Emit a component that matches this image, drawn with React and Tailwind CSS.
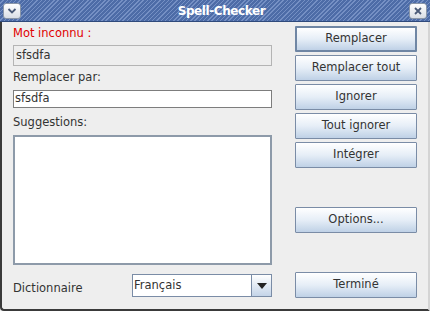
import React from 'react';

const font = { fontFamily: '"DejaVu Sans", "Liberation Sans", sans-serif' };

function Btn({ children, primary }) {
  return (
    <button
      className={
        'w-[122px] h-[26px] flex items-center justify-center text-[11.5px] text-[#333333] bg-gradient-to-b from-[#ffffff] via-[#e6eef7] to-[#bfd1e6] rounded-[1px] ' +
        (primary ? 'border-2 border-[#6f86a4]' : 'border border-[#7a8ca6]')
      }
    >
      {children}
    </button>
  );
}

function TitleButton({ children }) {
  return (
    <div className="w-[18px] h-[16px] flex items-center justify-center rounded-[3px] border border-[#8a96a8] bg-gradient-to-b from-[#ffffff] to-[#d9dee6]">
      {children}
    </div>
  );
}

export default function App() {
  return (
    <div style={font} className="w-[430px] h-[311px] flex flex-col bg-[#eeeeee] overflow-hidden">
      {/* Title bar */}
      <div className="h-[22px] flex items-center justify-between px-[3px] bg-[#4c6ba6] bg-[repeating-linear-gradient(135deg,#4d6ca7_0px,#4d6ca7_2px,#7590c4_2px,#7590c4_3px)] border-b border-[#2f4a7c]">
        <TitleButton>
          <svg width="10" height="8" viewBox="0 0 10 8">
            <path d="M1.5 2 L5 5.5 L8.5 2" fill="none" stroke="#4a5a78" strokeWidth="1.8" />
          </svg>
        </TitleButton>
        <div className="text-white font-bold text-[12px] tracking-[-0.4px] ml-[13px]">Spell-Checker</div>
        <TitleButton>
          <svg width="8" height="8" viewBox="0 0 8 8">
            <path d="M1 1 L7 7 M7 1 L1 7" fill="none" stroke="#4a5a78" strokeWidth="1.8" />
          </svg>
        </TitleButton>
      </div>

      {/* Body */}
      <div className="flex-1 flex border-l-2 border-r-2 border-b-2 border-l-[#3a3a3a] border-r-[#d4d4d4] border-b-[#3a3a3a] rounded-bl-[4px] pl-[11px]">
        {/* Left column */}
        <div className="w-[259px] flex flex-col">
          <div className="mt-[4px] h-[14px] leading-[14px] text-[11.5px] text-[#e00000]">Mot inconnu :</div>
          <div className="mt-[5px] h-[21px] border border-[#b4b4b4] bg-[#eeeeee] px-[2px] flex items-center text-[11.5px] text-[#333333]">
            sfsdfa
          </div>
          <div className="mt-[4px] h-[14px] leading-[14px] text-[11.5px] text-[#333333]">Remplacer par:</div>
          <div className="mt-[6px] h-[18px] border border-[#7d7d7d] bg-white px-[1px] flex items-center text-[11.5px] text-[#333333]">
            sfsdfa
          </div>
          <div className="mt-[7px] h-[14px] leading-[14px] text-[11.5px] text-[#333333]">Suggestions:</div>
          <div className="mt-[6px] h-[130px] border-2 border-[#8d9aa9] bg-white" />
          <div className="mt-[9px] h-[23px] flex items-center">
            <div className="w-[119px] text-[11.5px] text-[#333333] pt-[6px]">Dictionnaire</div>
            <div className="flex-1 h-[23px] flex border border-[#7a8ca6] bg-white">
              <div className="flex-1 flex items-center px-[1px] text-[11.5px] text-[#333333] border-r border-[#7a8ca6]">
                Français
              </div>
              <div className="w-[19px] flex items-center justify-center bg-gradient-to-b from-[#ffffff] to-[#c4d4e8]">
                <svg width="10" height="6" viewBox="0 0 10 6">
                  <path d="M0 0 L10 0 L5 6 Z" fill="#222222" />
                </svg>
              </div>
            </div>
          </div>
        </div>

        {/* Right column */}
        <div className="ml-[23px] flex flex-col pt-[4px]">
          <div className="flex flex-col gap-[3px]">
            <Btn primary>Remplacer</Btn>
            <Btn>Remplacer tout</Btn>
            <Btn>Ignorer</Btn>
            <Btn>Tout ignorer</Btn>
            <Btn>Intégrer</Btn>
          </div>
          <div className="mt-[39px]">
            <Btn>Options...</Btn>
          </div>
          <div className="mt-[39px]">
            <Btn>Terminé</Btn>
          </div>
        </div>
      </div>
    </div>
  );
}
